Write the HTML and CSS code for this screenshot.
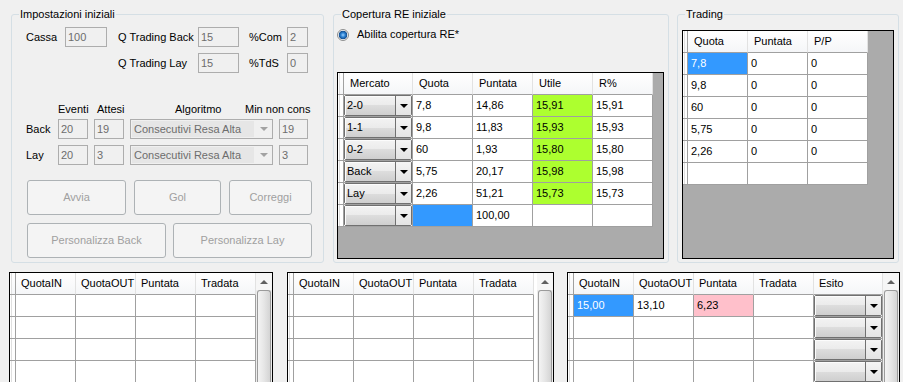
FILE: index.html
```html
<!DOCTYPE html>
<html lang="it">
<head>
    <meta charset="UTF-8">
    <title>Trading</title>
    <link rel="stylesheet" href="styles.css">
</head>
<body>
    <div class="top">
        <!-- Impostazioni iniziali -->
        <div class="group g-settings">
            <span class="group-title">Impostazioni iniziali</span>
            <div class="form-row">
                <span class="lbl w39">Cassa</span>
                <div class="txt w42">100</div>
                <span class="lbl w80 ml11">Q Trading Back</span>
                <div class="txt w41">15</div>
                <span class="lbl w38 ml10">%Com</span>
                <div class="txt w21">2</div>
            </div>
            <div class="form-row mt6">
                <span class="w92"></span>
                <span class="lbl w80">Q Trading Lay</span>
                <div class="txt w41">15</div>
                <span class="lbl w38 ml10">%TdS</span>
                <div class="txt w21">0</div>
            </div>
            <div class="head-row">
                <span class="w32"></span>
                <span class="w39">Eventi</span>
                <span class="w78">Attesi</span>
                <span class="w70">Algoritmo</span>
                <span>Min non cons</span>
            </div>
            <div class="form-row mt3">
                <span class="lbl w32">Back</span>
                <div class="txt w30">20</div>
                <div class="txt w30 ml6">19</div>
                <div class="combo ml6"><span class="combo-text">Consecutivi Resa Alta</span><span class="combo-arrow"></span></div>
                <div class="txt w29 ml6">19</div>
            </div>
            <div class="form-row mt6">
                <span class="lbl w32">Lay</span>
                <div class="txt w30">20</div>
                <div class="txt w30 ml6">3</div>
                <div class="combo ml6"><span class="combo-text">Consecutivi Resa Alta</span><span class="combo-arrow"></span></div>
                <div class="txt w29 ml6">3</div>
            </div>
            <div class="btn-row mt15">
                <button class="btn w99" disabled>Avvia</button>
                <button class="btn w87 ml8" disabled>Gol</button>
                <button class="btn w83 ml8" disabled>Correggi</button>
            </div>
            <div class="btn-row mt8">
                <button class="btn w139" disabled>Personalizza Back</button>
                <button class="btn w139 ml7" disabled>Personalizza Lay</button>
            </div>
        </div>

        <!-- Copertura RE iniziale -->
        <div class="group g-cover">
            <span class="group-title">Copertura RE iniziale</span>
            <div class="radio-row">
                <span class="radio"></span>
                <span>Abilita copertura RE*</span>
            </div>
            <div class="dgv dgv-cover">
                <div class="dgv-body cols-cover">
                    <div class="cell hcell rh"></div>
                    <div class="cell hcell">Mercato</div>
                    <div class="cell hcell">Quota</div>
                    <div class="cell hcell">Puntata</div>
                    <div class="cell hcell">Utile</div>
                    <div class="cell hcell">R%</div>

                    <div class="cell rh"></div>
                    <div class="cell ccell"><div class="gcombo"><span class="gc-text">2-0</span><span class="gc-btn"></span></div></div>
                    <div class="cell">7,8</div>
                    <div class="cell">14,86</div>
                    <div class="cell green">15,91</div>
                    <div class="cell">15,91</div>

                    <div class="cell rh"></div>
                    <div class="cell ccell"><div class="gcombo"><span class="gc-text">1-1</span><span class="gc-btn"></span></div></div>
                    <div class="cell">9,8</div>
                    <div class="cell">11,83</div>
                    <div class="cell green">15,93</div>
                    <div class="cell">15,93</div>

                    <div class="cell rh"></div>
                    <div class="cell ccell"><div class="gcombo"><span class="gc-text">0-2</span><span class="gc-btn"></span></div></div>
                    <div class="cell">60</div>
                    <div class="cell">1,93</div>
                    <div class="cell green">15,80</div>
                    <div class="cell">15,80</div>

                    <div class="cell rh"></div>
                    <div class="cell ccell"><div class="gcombo"><span class="gc-text">Back</span><span class="gc-btn"></span></div></div>
                    <div class="cell">5,75</div>
                    <div class="cell">20,17</div>
                    <div class="cell green">15,98</div>
                    <div class="cell">15,98</div>

                    <div class="cell rh"></div>
                    <div class="cell ccell"><div class="gcombo"><span class="gc-text">Lay</span><span class="gc-btn"></span></div></div>
                    <div class="cell">2,26</div>
                    <div class="cell">51,21</div>
                    <div class="cell green">15,73</div>
                    <div class="cell">15,73</div>

                    <div class="cell rh"></div>
                    <div class="cell ccell"><div class="gcombo"><span class="gc-text"></span><span class="gc-btn"></span></div></div>
                    <div class="cell selected"></div>
                    <div class="cell">100,00</div>
                    <div class="cell"></div>
                    <div class="cell"></div>
                </div>
            </div>
        </div>

        <!-- Trading -->
        <div class="group g-trading">
            <span class="group-title">Trading</span>
            <div class="dgv dgv-trading">
                <div class="dgv-body cols-trading">
                    <div class="cell hcell rh"></div>
                    <div class="cell hcell">Quota</div>
                    <div class="cell hcell">Puntata</div>
                    <div class="cell hcell">P/P</div>

                    <div class="cell rh"></div>
                    <div class="cell selected">7,8</div>
                    <div class="cell">0</div>
                    <div class="cell">0</div>

                    <div class="cell rh"></div>
                    <div class="cell">9,8</div>
                    <div class="cell">0</div>
                    <div class="cell">0</div>

                    <div class="cell rh"></div>
                    <div class="cell">60</div>
                    <div class="cell">0</div>
                    <div class="cell">0</div>

                    <div class="cell rh"></div>
                    <div class="cell">5,75</div>
                    <div class="cell">0</div>
                    <div class="cell">0</div>

                    <div class="cell rh"></div>
                    <div class="cell">2,26</div>
                    <div class="cell">0</div>
                    <div class="cell">0</div>

                    <div class="cell rh"></div>
                    <div class="cell"></div>
                    <div class="cell"></div>
                    <div class="cell"></div>
                </div>
            </div>
        </div>
    </div>

    <div class="bottom">
        <!-- Back trades -->
        <div class="dgv dgv-list dgv-b1">
            <div class="dgv-body cols-list">
                <div class="cell hcell rh"></div>
                <div class="cell hcell">QuotaIN</div>
                <div class="cell hcell">QuotaOUT</div>
                <div class="cell hcell">Puntata</div>
                <div class="cell hcell">Tradata</div>
                <div class="cell rh"></div><div class="cell"></div><div class="cell"></div><div class="cell"></div><div class="cell"></div>
                <div class="cell rh"></div><div class="cell"></div><div class="cell"></div><div class="cell"></div><div class="cell"></div>
                <div class="cell rh"></div><div class="cell"></div><div class="cell"></div><div class="cell"></div><div class="cell"></div>
                <div class="cell rh"></div><div class="cell"></div><div class="cell"></div><div class="cell"></div><div class="cell"></div>
            </div>
            <div class="vscroll"><span class="vs-up"></span><span class="vs-thumb"></span></div>
        </div>

        <!-- Lay trades -->
        <div class="dgv dgv-list dgv-b2">
            <div class="dgv-body cols-list">
                <div class="cell hcell rh"></div>
                <div class="cell hcell">QuotaIN</div>
                <div class="cell hcell">QuotaOUT</div>
                <div class="cell hcell">Puntata</div>
                <div class="cell hcell">Tradata</div>
                <div class="cell rh"></div><div class="cell"></div><div class="cell"></div><div class="cell"></div><div class="cell"></div>
                <div class="cell rh"></div><div class="cell"></div><div class="cell"></div><div class="cell"></div><div class="cell"></div>
                <div class="cell rh"></div><div class="cell"></div><div class="cell"></div><div class="cell"></div><div class="cell"></div>
                <div class="cell rh"></div><div class="cell"></div><div class="cell"></div><div class="cell"></div><div class="cell"></div>
            </div>
            <div class="vscroll"><span class="vs-up"></span><span class="vs-thumb"></span></div>
        </div>

        <!-- Esito trades -->
        <div class="dgv dgv-list dgv-b3">
            <div class="dgv-body cols-esito">
                <div class="cell hcell rh"></div>
                <div class="cell hcell">QuotaIN</div>
                <div class="cell hcell">QuotaOUT</div>
                <div class="cell hcell">Puntata</div>
                <div class="cell hcell">Tradata</div>
                <div class="cell hcell">Esito</div>

                <div class="cell rh"></div>
                <div class="cell selected">15,00</div>
                <div class="cell">13,10</div>
                <div class="cell pink">6,23</div>
                <div class="cell"></div>
                <div class="cell ccell"><div class="gcombo"><span class="gc-text"></span><span class="gc-btn"></span></div></div>

                <div class="cell rh"></div><div class="cell"></div><div class="cell"></div><div class="cell"></div><div class="cell"></div>
                <div class="cell ccell"><div class="gcombo"><span class="gc-text"></span><span class="gc-btn"></span></div></div>

                <div class="cell rh"></div><div class="cell"></div><div class="cell"></div><div class="cell"></div><div class="cell"></div>
                <div class="cell ccell"><div class="gcombo"><span class="gc-text"></span><span class="gc-btn"></span></div></div>

                <div class="cell rh"></div><div class="cell"></div><div class="cell"></div><div class="cell"></div><div class="cell"></div>
                <div class="cell ccell"><div class="gcombo"><span class="gc-text"></span><span class="gc-btn"></span></div></div>
            </div>
            <div class="vscroll"><span class="vs-up"></span><span class="vs-thumb"></span></div>
        </div>
    </div>
</body>
</html>
```

FILE: styles.css
```css
html, body {
    height: 382px;
    overflow: hidden;
}
body {
    margin: 0;
    background-color: #f0f0f0;
    color: #000;
    font-family: "Liberation Sans", Arial, sans-serif;
    font-size: 11px;
    line-height: 13px;
}

/* group boxes */
.top {
    display: flex;
    padding: 14px 0 0 11px;
}
.group {
    position: relative;
    box-sizing: border-box;
    height: 249px;
    border: 1px solid #d5dfe5;
    border-radius: 3px;
}
.group-title {
    position: absolute;
    top: -7px;
    left: 7px;
    padding: 0 1px;
    background-color: #f0f0f0;
}
.g-settings {
    width: 313px;
    padding: 12px 0 0 14px;
}
.g-cover {
    width: 336px;
    margin-left: 9px;
    padding: 13px 0 0 3px;
}
.g-trading {
    width: 222px;
    margin-left: 8px;
    padding: 15px 0 0 4px;
}

/* form rows */
.form-row, .btn-row, .head-row {
    display: flex;
    align-items: center;
}
.form-row { height: 20px; }
.head-row { margin-top: 30px; height: 13px; }
.btn-row { margin-left: 1px; }

.lbl { white-space: nowrap; }
.txt {
    box-sizing: border-box;
    height: 20px;
    padding-left: 2px;
    border: 1px solid #adadad;
    color: #6d6d6d;
    line-height: 18px;
}
.combo {
    box-sizing: border-box;
    display: flex;
    width: 143px;
    height: 20px;
    border: 1px solid #adadad;
    color: #6d6d6d;
}
.combo-text {
    width: 120px;
    margin: 1px;
    padding-left: 2px;
    background-color: #e6e6e6;
    line-height: 16px;
    white-space: nowrap;
}
.combo-arrow {
    flex: 1;
    display: flex;
    align-items: center;
    justify-content: center;
}
.combo-arrow::after {
    content: "";
    border-left: 4px solid transparent;
    border-right: 4px solid transparent;
    border-top: 4px solid #a2a2a2;
}
.btn {
    box-sizing: border-box;
    height: 35px;
    padding: 0;
    border: 1px solid #adb2b5;
    border-radius: 3px;
    background-color: #f4f4f4;
    color: #a0a0a0;
    font: inherit;
}

.w21 { width: 21px; }
.w29 { width: 29px; }
.w30 { width: 30px; }
.w32 { width: 32px; flex-shrink: 0; }
.w38 { width: 38px; }
.w39 { width: 39px; }
.w41 { width: 41px; }
.w42 { width: 42px; }
.w70 { width: 70px; }
.w78 { width: 78px; }
.w80 { width: 80px; }
.w83 { width: 83px; }
.w87 { width: 87px; }
.w92 { width: 92px; flex-shrink: 0; }
.w99 { width: 99px; }
.w139 { width: 139px; }
.ml6 { margin-left: 6px; }
.ml7 { margin-left: 7px; }
.ml8 { margin-left: 8px; }
.ml10 { margin-left: 10px; }
.ml11 { margin-left: 11px; }
.mt3 { margin-top: 3px; }
.mt6 { margin-top: 6px; }
.mt8 { margin-top: 8px; }
.mt15 { margin-top: 15px; }

/* radio */
.radio-row {
    display: flex;
    align-items: center;
    gap: 8px;
    height: 13px;
    margin-bottom: 31px;
}
.radio {
    box-sizing: border-box;
    width: 12px;
    height: 12px;
    border: 1px solid #8e8f8f;
    border-radius: 50%;
    background: radial-gradient(circle, #9fd0fa 0, #2f86d8 2px, #164f8e 4px, #f6f6f6 4.6px, #dcdcdc 100%);
}

/* data grids */
.dgv {
    box-sizing: border-box;
    display: flex;
    align-items: flex-start;
    border: 1px solid #000;
    background-color: #ababab;
    overflow: hidden;
}
.dgv-cover { width: 327px; height: 187px; }
.dgv-trading { width: 212px; height: 229px; }
.dgv-body { display: grid; }
.cols-cover { grid-template-columns: 6px 69px 60px 60px 60px 60px; }
.cols-trading { grid-template-columns: 5px 60px 60px 60px; }
.cols-list { grid-template-columns: 6px 60px 60px 60px 60px; }
.cols-esito { grid-template-columns: 6px 60px 60px 60px 60px 69px; }

.cell {
    box-sizing: border-box;
    height: 22px;
    padding-left: 3px;
    border-right: 1px solid #a0a0a0;
    border-bottom: 1px solid #a0a0a0;
    background-color: #fff;
    line-height: 21px;
    white-space: nowrap;
    overflow: hidden;
}
.hcell {
    padding-left: 6px;
    border-right-color: #e2e2e2;
    background: linear-gradient(#ffffff, #f5f6f8);
}
.cell.rh {
    padding: 0;
    border-right-color: #a0a0a0;
    box-shadow: inset 1px 0 #ffffff, inset 2px 0 #e0e0e0;
}
.green { background-color: #adff2f; }
.pink { background-color: #ffc0cb; }
.selected { background-color: #3399ff; color: #fff; }

.ccell { padding: 0; }
.gcombo {
    box-sizing: border-box;
    display: flex;
    height: 21px;
    border: 1px solid #707070;
    border-radius: 2px;
}
.gc-text {
    flex: 1;
    padding-left: 2px;
    border-right: 1px solid #707070;
    background: linear-gradient(#f3f3f3, #ebebeb 50%, #dddddd 50%, #cfcfcf);
    box-shadow: inset 1px 1px #fcfcfc;
    line-height: 19px;
}
.gc-btn {
    width: 15px;
    display: flex;
    align-items: center;
    justify-content: center;
    background: linear-gradient(#f4f4f4, #e4e4e4);
}
.gc-btn::after {
    content: "";
    margin-top: 1px;
    border-left: 4px solid transparent;
    border-right: 4px solid transparent;
    border-top: 4px solid #000;
}

/* bottom grids, cut off by the window edge */
.bottom {
    display: flex;
    margin-top: 9px;
    padding-left: 9px;
}
.dgv-list {
    height: 110px;
    align-items: stretch;
    border-bottom: 0;
    background-color: #fff;
}
.dgv-list .dgv-body { align-self: flex-start; }
.dgv-list .hcell { padding-left: 5px; }
.dgv-b1 { width: 264px; }
.dgv-b2 { width: 267px; margin-left: 14px; }
.dgv-b3 { width: 333px; margin-left: 13px; }
.vscroll {
    display: flex;
    flex-direction: column;
    width: 16px;
    margin-left: auto;
    background-color: #ececec;
}
.vs-up {
    height: 17px;
    flex-shrink: 0;
    display: flex;
    align-items: center;
    justify-content: center;
    background-color: #f6f6f6;
}
.vs-up::after {
    content: "";
    border-left: 4px solid transparent;
    border-right: 4px solid transparent;
    border-bottom: 4px solid #606060;
}
.vs-thumb {
    flex: 1;
    margin: 0 1px;
    border: 1px solid #9b9b9b;
    border-bottom: 0;
    border-radius: 3px 3px 0 0;
    background: linear-gradient(90deg, #f4f4f4, #e6e6e6 50%, #d4d4d4);
}
```
